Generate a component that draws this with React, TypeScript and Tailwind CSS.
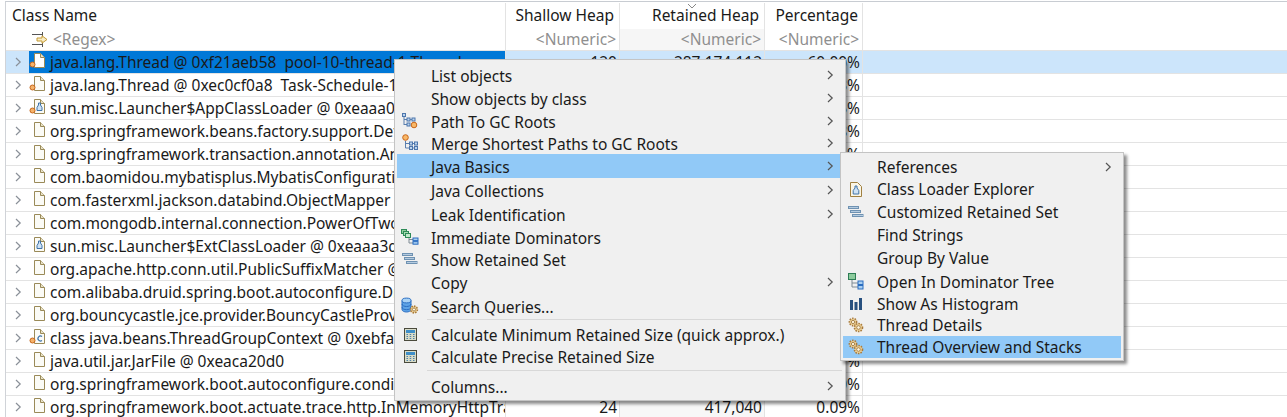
import React from "react";

const font = { fontFamily: '"Noto Sans", "Open Sans", sans-serif' };

function Dot({ x = 1, y = 11 }: { x?: number; y?: number }) {
  return <circle cx={x + 2.5} cy={y + 2.5} r="2.5" fill="#f5b36a" stroke="#c8661a" strokeWidth="1" />;
}

function Page({ kind }: { kind: string }) {
  return (
    <svg width="18" height="18" viewBox="0 0 18 18" className="shrink-0">
      <path d="M5.500 1.500h6l4 4v10h-10z" fill={kind.includes("sel") ? "#ffffff" : "#fbfbf6"} stroke="#9a8a58" strokeWidth="1" />
      <path d="M11.500 1.500v4h4" fill="#e8e2c8" stroke="#9a8a58" strokeWidth="1" />
      {kind.includes("bottle") && (
        <path d="M9.500 5h2v2l1.500 2.500v3h-5v-3L9.500 7z" fill="#cfe3f5" stroke="#3f73a8" strokeWidth="1" />
      )}
      {kind.includes("class") && (
        <path d="M13 8.500a2.500 2.500 0 1 0 0 4" fill="none" stroke="#3f73a8" strokeWidth="1.200" />
      )}
      {kind.includes("dot") && <Dot x={1} y={10} />}
    </svg>
  );
}

function Chevron({ color = "#7a8087" }: { color?: string }) {
  return (
    <svg width="7" height="10" viewBox="0 0 7 10" className="shrink-0">
      <path d="M1 1l4.200 4L1 9" fill="none" stroke={color} strokeWidth="1.200" />
    </svg>
  );
}

function FilterIcon() {
  return (
    <svg width="16" height="16" viewBox="0 0 16 16" className="shrink-0">
      <path d="M0 2.500h10M10.500 0v5M0 12.500h10M10.500 10v5" stroke="#555555" strokeWidth="1" fill="none" />
      <path d="M5 6h5V3.800L15 7.500l-5 3.700V9H5z" fill="#f8ecc4" stroke="#c49a35" strokeWidth="1" />
    </svg>
  );
}

function PathsIcon({ merge }: { merge?: boolean }) {
  if (merge)
    return (
      <svg width="16" height="18" viewBox="0 0 16 18">
        <circle cx="3.500" cy="3.500" r="2.800" fill="#f8b868" stroke="#c8661a" />
        <path d="M3.500 7v7M3.500 9.500h4M3.500 14h4M10.500 9.500h2M10.500 14h2" stroke="#5a7fae" fill="none" />
        <rect x="7.500" y="8" width="3" height="3" fill="#bcd4ee" stroke="#4d76ac" />
        <rect x="7.500" y="12.500" width="3" height="3" fill="#bcd4ee" stroke="#4d76ac" />
        <rect x="12.500" y="8" width="3" height="3" fill="#bcd4ee" stroke="#4d76ac" />
        <rect x="12.500" y="12.500" width="3" height="3" fill="#bcd4ee" stroke="#4d76ac" />
      </svg>
    );
  return (
    <svg width="16" height="16" viewBox="0 0 16 16">
      <rect x=".500" y=".500" width="3" height="3" fill="#bcd4ee" stroke="#4d76ac" />
      <path d="M2 4v8M2 6.500h3M2 11.500h3" stroke="#5a7fae" fill="none" />
      <rect x="5" y="5" width="3" height="3" fill="#bcd4ee" stroke="#4d76ac" />
      <rect x="10" y="5" width="3" height="3" fill="#bcd4ee" stroke="#4d76ac" />
      <path d="M8 6.500h2" stroke="#5a7fae" />
      <circle cx="12" cy="12" r="2.800" fill="#f8b868" stroke="#c8661a" />
      <rect x="5" y="10" width="3" height="3" fill="#bcd4ee" stroke="#4d76ac" />
    </svg>
  );
}

function DominatorsIcon() {
  return (
    <svg width="18" height="16" viewBox="0 0 18 16">
      <rect x=".500" y=".500" width="5" height="4" fill="#8fcc9c" stroke="#2e8b57" />
      <rect x="2.500" y="2.500" width="5" height="4" fill="#a8dcb2" stroke="#2e8b57" />
      <rect x="4.500" y="4.500" width="5" height="4" fill="#c2e8ca" stroke="#2e8b57" />
      <path d="M8 9v5h4M8 10.500h4" stroke="#7f8a94" fill="none" />
      <rect x="12" y="9" width="5" height="2.600" fill="#a9cff0" stroke="#2a6cc0" />
      <rect x="12" y="12.600" width="5" height="2.600" fill="#a9cff0" stroke="#2a6cc0" />
    </svg>
  );
}

function SetIcon() {
  return (
    <svg width="16" height="12" viewBox="0 0 16 12">
      <rect x=".500" y=".500" width="10" height="2" fill="#b4cbe0" stroke="#6f92b2" />
      <rect x="2.500" y="4.500" width="10" height="2" fill="#b4cbe0" stroke="#6f92b2" />
      <rect x="4.500" y="8.500" width="10.500" height="2" fill="#b4cbe0" stroke="#6f92b2" />
    </svg>
  );
}

function Gear({ x, y, r }: { x: number; y: number; r: number }) {
  return (
    <g>
      <circle cx={x} cy={y} r={r} fill="#f0d49a" stroke="#a87a3c" strokeWidth="1.600" strokeDasharray="1.500 1.100" />
      <circle cx={x} cy={y} r={r * 0.45} fill="#fff6e0" stroke="#94703a" strokeWidth=".800" />
    </g>
  );
}

function DbIcon() {
  return (
    <svg width="18" height="18" viewBox="0 0 18 18">
      <path d="M1 3.500v9c0 1.600 2.400 2.500 4.500 2.500s4.500-.9 4.500-2.500v-9z" fill="#5ea3e6" stroke="#2b6ec2" />
      <ellipse cx="5.500" cy="3.500" rx="4.500" ry="2.400" fill="#a9d2f5" stroke="#2b6ec2" />
      <path d="M1 7c0 1.600 2.400 2.500 4.500 2.500S10 8.600 10 7M1 10.200c0 1.600 2.400 2.500 4.500 2.500s4.500-.9 4.500-2.500" fill="none" stroke="#2b6ec2" />
      <Gear x={13} y={12.500} r={3.400} />
    </svg>
  );
}

function CalcIcon() {
  return (
    <svg width="13" height="13" viewBox="0 0 13 13">
      <rect x=".500" y=".500" width="12" height="12" fill="#d8dcc8" stroke="#4a4a3c" />
      <rect x="2" y="2" width="9" height="3" fill="#3f8fc8" />
      <path d="M2.500 6.500h1.500M5.700 6.500h1.500M9 6.500h1.500M2.500 8.500h1.500M5.700 8.500h1.500M9 8.500h1.500M2.500 10.500h1.500M5.700 10.500h1.500M9 10.500h1.500" stroke="#4f7fa6" />
    </svg>
  );
}

function BottleIcon() {
  return (
    <svg width="12" height="15" viewBox="0 0 12 15">
      <path d="M.5.5h7l4 4v10H.5z" fill="#fbf6e6" stroke="#a08040" />
      <path d="M5 4h2v2l1.800 2.500V12H3.200V8.500L5 6z" fill="#cfe3f5" stroke="#3f73a8" />
    </svg>
  );
}

function TreeIcon() {
  return (
    <svg width="16" height="17" viewBox="0 0 16 17">
      <rect x=".500" y=".500" width="7" height="6" fill="#8ccb9c" stroke="#2e7d55" />
      <path d="M4 7v7h6M4 10h6" stroke="#7f8a94" fill="none" />
      <rect x="10" y="8" width="5" height="3.500" fill="#a9cff0" stroke="#2a6cc0" />
      <rect x="10" y="12.500" width="5" height="3.500" fill="#a9cff0" stroke="#2a6cc0" />
    </svg>
  );
}

function BarsIcon() {
  return (
    <svg width="12" height="12" viewBox="0 0 12 12">
      <rect x="0" y="2" width="3" height="10" fill="#27507f" />
      <rect x="4.500" y="4" width="3" height="8" fill="#27507f" />
      <rect x="9" y="0" width="3" height="12" fill="#27507f" />
    </svg>
  );
}

function GearsIcon() {
  return (
    <svg width="16" height="16" viewBox="0 0 16 16">
      <Gear x={5} y={5} r={3.600} />
      <Gear x={10.500} y={10.500} r={4} />
    </svg>
  );
}

const rows: { icon: string; text: string; shallow: string; retained: string; pct: string }[] = [
  { icon: "sel dot", text: "java.lang.Thread @ 0xf21aeb58  pool-10-thread-1 Thread", shallow: "120", retained: "287,174,112", pct: "60.00%" },
  { icon: "dot", text: "java.lang.Thread @ 0xec0cf0a8  Task-Schedule-1 Thread", shallow: "120", retained: "22,174,112", pct: "4.63%" },
  { icon: "bottle dot", text: "sun.misc.Launcher$AppClassLoader @ 0xeaaa0000", shallow: "88", retained: "14,120,040", pct: "2.95%" },
  { icon: "", text: "org.springframework.beans.factory.support.DefaultListableBeanFactory", shallow: "224", retained: "6,120,040", pct: "1.28%" },
  { icon: "", text: "org.springframework.transaction.annotation.AnnotationTransactionAttributeSource", shallow: "32", retained: "3,120,040", pct: "0.65%" },
  { icon: "", text: "com.baomidou.mybatisplus.MybatisConfiguration", shallow: "264", retained: "2,120,040", pct: "0.44%" },
  { icon: "", text: "com.fasterxml.jackson.databind.ObjectMapper @ 0xe", shallow: "72", retained: "1,620,040", pct: "0.34%" },
  { icon: "", text: "com.mongodb.internal.connection.PowerOfTwoBufferPool", shallow: "32", retained: "1,420,040", pct: "0.30%" },
  { icon: "bottle", text: "sun.misc.Launcher$ExtClassLoader @ 0xeaaa3d80", shallow: "88", retained: "1,120,040", pct: "0.23%" },
  { icon: "", text: "org.apache.http.conn.util.PublicSuffixMatcher @ 0xe", shallow: "24", retained: "920,040", pct: "0.19%" },
  { icon: "", text: "com.alibaba.druid.spring.boot.autoconfigure.DruidDataSource", shallow: "32", retained: "820,040", pct: "0.17%" },
  { icon: "", text: "org.bouncycastle.jce.provider.BouncyCastleProvider", shallow: "72", retained: "720,040", pct: "0.15%" },
  { icon: "class dot", text: "class java.beans.ThreadGroupContext @ 0xebfa0000", shallow: "8", retained: "620,040", pct: "0.13%" },
  { icon: "", text: "java.util.jar.JarFile @ 0xeaca20d0", shallow: "72", retained: "520,040", pct: "0.11%" },
  { icon: "", text: "org.springframework.boot.autoconfigure.condition.ConditionEvaluationReport", shallow: "32", retained: "460,040", pct: "0.10%" },
  { icon: "", text: "org.springframework.boot.actuate.trace.http.InMemoryHttpTraceRepository", shallow: "24", retained: "417,040", pct: "0.09%" },
];

type Item = { label?: string; h: string; icon?: React.ReactNode; sub?: boolean; active?: boolean; sep?: boolean };

const mainItems: Item[] = [
  { label: "List objects", h: "h-[23px]", sub: true },
  { label: "Show objects by class", h: "h-[24px]", sub: true },
  { label: "Path To GC Roots", h: "h-[21px]", sub: true, icon: <PathsIcon /> },
  { label: "Merge Shortest Paths to GC Roots", h: "h-[23px]", sub: true, icon: <PathsIcon merge /> },
  { label: "Java Basics", h: "h-[24px]", sub: true, active: true },
  { label: "Java Collections", h: "h-[24px]", sub: true },
  { label: "Leak Identification", h: "h-[23px]", sub: true },
  { label: "Immediate Dominators", h: "h-[24px]", icon: <DominatorsIcon /> },
  { label: "Show Retained Set", h: "h-[20px]", icon: <SetIcon /> },
  { label: "Copy", h: "h-[26px]", sub: true },
  { label: "Search Queries...", h: "h-[21px]", icon: <DbIcon /> },
  { sep: true, h: "h-[7px]" },
  { label: "Calculate Minimum Retained Size (quick approx.)", h: "h-[22px]", icon: <CalcIcon /> },
  { label: "Calculate Precise Retained Size", h: "h-[22px]", icon: <CalcIcon /> },
  { sep: true, h: "h-[7px]" },
  { label: "Columns...", h: "h-[24px]", sub: true },
];

const subItems: Item[] = [
  { label: "References", h: "h-[22px]", sub: true },
  { label: "Class Loader Explorer", h: "h-[22px]", icon: <BottleIcon /> },
  { label: "Customized Retained Set", h: "h-[23px]", icon: <SetIcon /> },
  { label: "Find Strings", h: "h-[23px]" },
  { label: "Group By Value", h: "h-[23px]" },
  { label: "Open In Dominator Tree", h: "h-[25px]", icon: <TreeIcon /> },
  { label: "Show As Histogram", h: "h-[20px]", icon: <BarsIcon /> },
  { label: "Thread Details", h: "h-[22px]", icon: <GearsIcon /> },
  { label: "Thread Overview and Stacks", h: "h-[22px]", active: true, icon: <GearsIcon /> },
];

function MenuRows({ items, labelPad }: { items: Item[]; labelPad: string }) {
  return (
    <>
      {items.map((it, i) =>
        it.sep ? (
          <div key={i} className={`${it.h} flex items-center pl-[30px] pr-px`}>
            <div className="h-px w-full bg-[#d8d8d8]" />
          </div>
        ) : (
          <div key={i} className={`${it.h} flex items-center ${it.active ? "bg-[#91c9f7]" : ""}`}>
            <div className="w-[34px] pr-[8px] shrink-0 flex items-center justify-center">{it.icon}</div>
            <span className={`flex-1 whitespace-nowrap leading-none text-[#1a1a1a] ${labelPad}`}>{it.label}</span>
            {it.sub && (
              <span className="pr-[9px] flex items-center">
                <Chevron color="#555555" />
              </span>
            )}
          </div>
        )
      )}
    </>
  );
}

export default function App() {
  return (
    <div style={font} className="relative w-[1287px] h-[417px] overflow-hidden bg-white text-[15.5px] text-[#1a1a1a]">
      <div className="pl-[5px] pt-px h-full">
        <div className="h-full border-l border-t border-l-[#d0d3d8] border-t-[#c8ccd2] pt-px">
          {/* Header */}
          <div className="flex h-[26px] items-center">
            <div className="w-[500px] h-full shrink-0 flex items-center pl-[6px] border-r border-[#e3e3e3]">Class Name</div>
            <div className="w-[114px] h-full shrink-0 flex items-center justify-end pr-[5px] border-r border-[#e3e3e3]">Shallow Heap</div>
            <div className="relative w-[145px] h-full shrink-0 flex items-center justify-end pr-[5px] border-r border-[#e3e3e3]">
              Retained Heap
              <svg width="10" height="5" viewBox="0 0 10 5" className="absolute left-[67px] top-[1px]">
                <path d="M1 0l4 4 4-4" fill="none" stroke="#888888" />
              </svg>
            </div>
            <div className="w-[98px] h-full shrink-0 flex items-center justify-end pr-[4px] border-r border-[#e3e3e3]">Percentage</div>
          </div>
          {/* Filter row */}
          <div className="flex h-[22px] items-center border-b border-[#e3e3e3] text-[#8f8f8f]">
            <div className="w-[500px] h-full shrink-0 flex items-center gap-[5px] pl-[26px] border-r border-[#e3e3e3]">
              <FilterIcon />
              <span>&lt;Regex&gt;</span>
            </div>
            <div className="w-[114px] h-full shrink-0 flex items-center justify-end pr-[3px] border-r border-[#e3e3e3]">&lt;Numeric&gt;</div>
            <div className="w-[145px] h-full shrink-0 flex items-center justify-end pr-[3px] border-r border-[#e3e3e3] bg-[#f6f6f6]">&lt;Numeric&gt;</div>
            <div className="w-[98px] h-full shrink-0 flex items-center justify-end pr-[3px] border-r border-[#e3e3e3]">&lt;Numeric&gt;</div>
          </div>
          {/* Rows */}
          {rows.map((r, i) => {
            const sel = i === 0;
            return (
              <div key={i} className={`flex h-[23px] items-center border-b border-[#e3e3e3] ${sel ? "bg-[#cce5fb]" : ""}`}>
                <div className="w-[500px] h-full shrink-0 flex items-center overflow-hidden border-r border-[#e3e3e3]">
                  <span className="w-[23px] shrink-0 flex justify-center pl-[1px]">
                    <Chevron color="#8a9098" />
                  </span>
                  <div className={`flex items-center h-full min-w-0 ${sel ? "bg-[#0078d7] w-[476px]" : ""}`}>
                    <span className="mr-[3px] -mt-[3px]"><Page kind={r.icon} /></span>
                    <span className="whitespace-pre pt-[2px]">{r.text}</span>
                  </div>
                </div>
                <div className="w-[114px] h-full shrink-0 flex items-center justify-end pr-[2px] pt-[2px] border-r border-[#e3e3e3]">{r.shallow}</div>
                <div className={`w-[145px] h-full shrink-0 flex items-center justify-end pr-[2px] pt-[2px] border-r border-[#e3e3e3] ${sel ? "" : "bg-[#f7f7f7]"}`}>{r.retained}</div>
                <div className="w-[98px] h-full shrink-0 flex items-center justify-end pr-[2px] pt-[2px] border-r border-[#e3e3e3]">{r.pct}</div>
              </div>
            );
          })}
        </div>
      </div>

      {/* Context menu */}
      <div className="absolute left-[394px] top-[59px] w-[452px] border border-[#c4c4c4] bg-[#f0f0f0] px-[2px] pt-[3px] pb-[2px] shadow-[3px_3px_3px_rgba(0,0,0,0.45)]">
        <MenuRows items={mainItems} labelPad="pt-[4px]" />
      </div>

      {/* Submenu */}
      <div className="absolute left-[840px] top-[152px] w-[284px] border border-[#c4c4c4] bg-[#f0f0f0] px-[2px] pt-[3px] pb-[2px] shadow-[3px_3px_3px_rgba(0,0,0,0.45)]">
        <MenuRows items={subItems} labelPad="pt-[2px]" />
      </div>
    </div>
  );
}
